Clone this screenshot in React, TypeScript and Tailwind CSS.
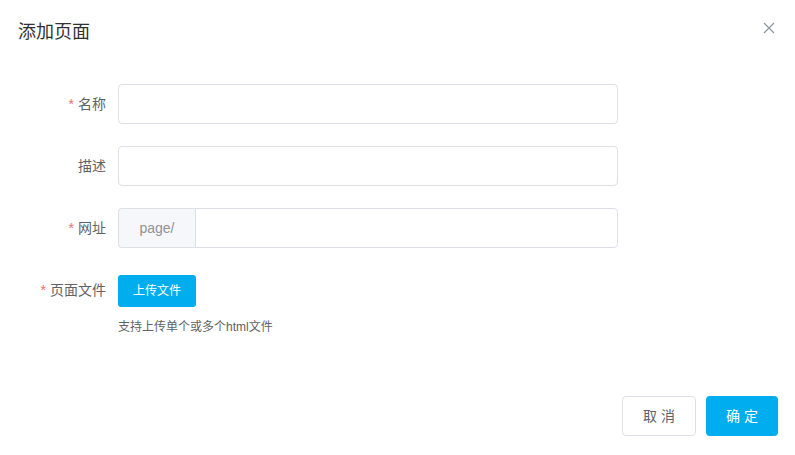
const font = "font-['Liberation_Sans','Noto_Sans_CJK_SC',sans-serif]";

function Label({ text, required }: { text: string; required?: boolean }) {
  return (
    <label className="w-[100px] shrink-0 pr-3 text-right text-sm leading-10 text-[#606266]">
      {required && <span className="mr-1 text-[#f56c6c]">*</span>}
      {text}
    </label>
  );
}

export default function App() {
  return (
    <div className={`${font} h-[455px] w-[795px] bg-white`}>
      <header className="flex items-start justify-between pl-[18px] pr-[20px] pt-5 pb-2.5">
        <span className="text-lg leading-6 text-[#303133]">添加页面</span>
        <button type="button" className="mt-[2px] text-[#909399]">
          <svg width="12" height="12" viewBox="0 0 12 12" fill="none">
            <path d="M1 1L11 11M11 1L1 11" stroke="currentColor" strokeWidth="1.2" />
          </svg>
        </button>
      </header>

      <div className="pl-[18px] pr-5 pt-[30px]">
        <div className="mb-[22px] flex">
          <Label text="名称" required />
          <input className="h-10 w-[500px] rounded border border-[#dcdfe6] px-[15px] text-sm outline-none" />
        </div>
        <div className="mb-[22px] flex">
          <Label text="描述" />
          <input className="h-10 w-[500px] rounded border border-[#dcdfe6] px-[15px] text-sm outline-none" />
        </div>
        <div className="mb-[22px] flex">
          <Label text="网址" required />
          <div className="flex h-10 w-[500px]">
            <div className="flex w-[77px] items-center justify-center rounded-l border border-r-0 border-[#dcdfe6] bg-[#f5f7fa] text-sm text-[#909399]">
              page/
            </div>
            <input className="h-10 flex-1 rounded-r border border-[#dcdfe6] px-[15px] text-sm outline-none" />
          </div>
        </div>
        <div className="flex">
          <Label text="页面文件" required />
          <div className="pt-[5px]">
            <button
              type="button"
              className="h-8 w-[78px] rounded-[3px] bg-[#00aeef] text-xs text-white"
            >
              上传文件
            </button>
            <p className="mt-[12px] text-xs text-[#606266]">支持上传单个或多个html文件</p>
          </div>
        </div>
      </div>

      <footer className="mt-[61px] flex justify-end gap-2.5 pr-[17px]">
        <button
          type="button"
          className="h-10 w-[74px] rounded border border-[#dcdfe6] bg-white text-sm text-[#606266]"
        >
          取 消
        </button>
        <button
          type="button"
          className="h-10 w-[72px] rounded bg-[#00aeef] text-sm text-white"
        >
          确 定
        </button>
      </footer>
    </div>
  );
}
